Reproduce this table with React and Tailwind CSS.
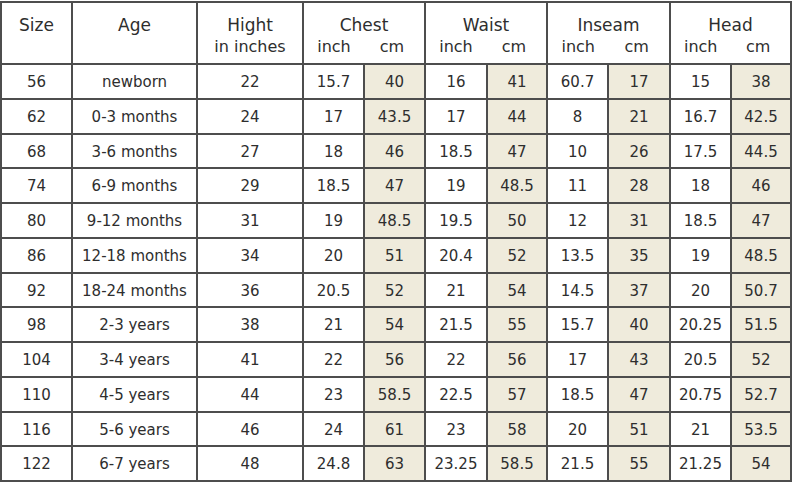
const rows = [
  ['56', 'newborn', '22', '15.7', '40', '16', '41', '60.7', '17', '15', '38'],
  ['62', '0-3 months', '24', '17', '43.5', '17', '44', '8', '21', '16.7', '42.5'],
  ['68', '3-6 months', '27', '18', '46', '18.5', '47', '10', '26', '17.5', '44.5'],
  ['74', '6-9 months', '29', '18.5', '47', '19', '48.5', '11', '28', '18', '46'],
  ['80', '9-12 months', '31', '19', '48.5', '19.5', '50', '12', '31', '18.5', '47'],
  ['86', '12-18 months', '34', '20', '51', '20.4', '52', '13.5', '35', '19', '48.5'],
  ['92', '18-24 months', '36', '20.5', '52', '21', '54', '14.5', '37', '20', '50.7'],
  ['98', '2-3 years', '38', '21', '54', '21.5', '55', '15.7', '40', '20.25', '51.5'],
  ['104', '3-4 years', '41', '22', '56', '22', '56', '17', '43', '20.5', '52'],
  ['110', '4-5 years', '44', '23', '58.5', '22.5', '57', '18.5', '47', '20.75', '52.7'],
  ['116', '5-6 years', '46', '24', '61', '23', '58', '20', '51', '21', '53.5'],
  ['122', '6-7 years', '48', '24.8', '63', '23.25', '58.5', '21.5', '55', '21.25', '54'],
]

// cm columns get the beige fill
const beige = [4, 6, 8, 10]

function PairHead({ title }) {
  return (
    <div className="col-span-2 bg-white pt-[11px] leading-[22px]">
      <div className="text-center text-[17px]">{title}</div>
      <div className="grid grid-cols-2 text-[16px]">
        <div className="text-center">inch</div>
        <div className="text-center pr-1">cm</div>
      </div>
    </div>
  )
}

export default function App() {
  return (
    <div className="w-[794px] h-[483px] bg-white pt-px" style={{ fontFamily: '"DejaVu Sans", sans-serif' }}>
      <div className="w-[792px] h-[481px] bg-[#4d4d4d] p-[2px] grid gap-[2px] grid-cols-[69px_123px_104px_59px_59px_60px_58px_59px_60px_59px_58px] grid-rows-[60px_repeat(12,1fr)] text-[#2e2e2e]">
        {/* Header */}
        <div className="bg-white pt-[11px] leading-[22px] text-center text-[17px]">Size</div>
        <div className="bg-white pt-[11px] leading-[22px] text-center text-[17px]">Age</div>
        <div className="bg-white pt-[11px] leading-[22px] text-center">
          <div className="text-[17px]">Hight</div>
          <div className="text-[16px]">in inches</div>
        </div>
        <PairHead title="Chest" />
        <PairHead title="Waist" />
        <PairHead title="Inseam" />
        <PairHead title="Head" />

        {/* Rows */}
        {rows.map((r) =>
          r.map((v, i) => (
            <div
              key={r[0] + '-' + i}
              className={`flex items-center justify-center pt-[2px] text-[15px] ${beige.includes(i) ? 'bg-[#efebdc]' : 'bg-white'}`}
            >
              {v}
            </div>
          ))
        )}
      </div>
    </div>
  )
}
